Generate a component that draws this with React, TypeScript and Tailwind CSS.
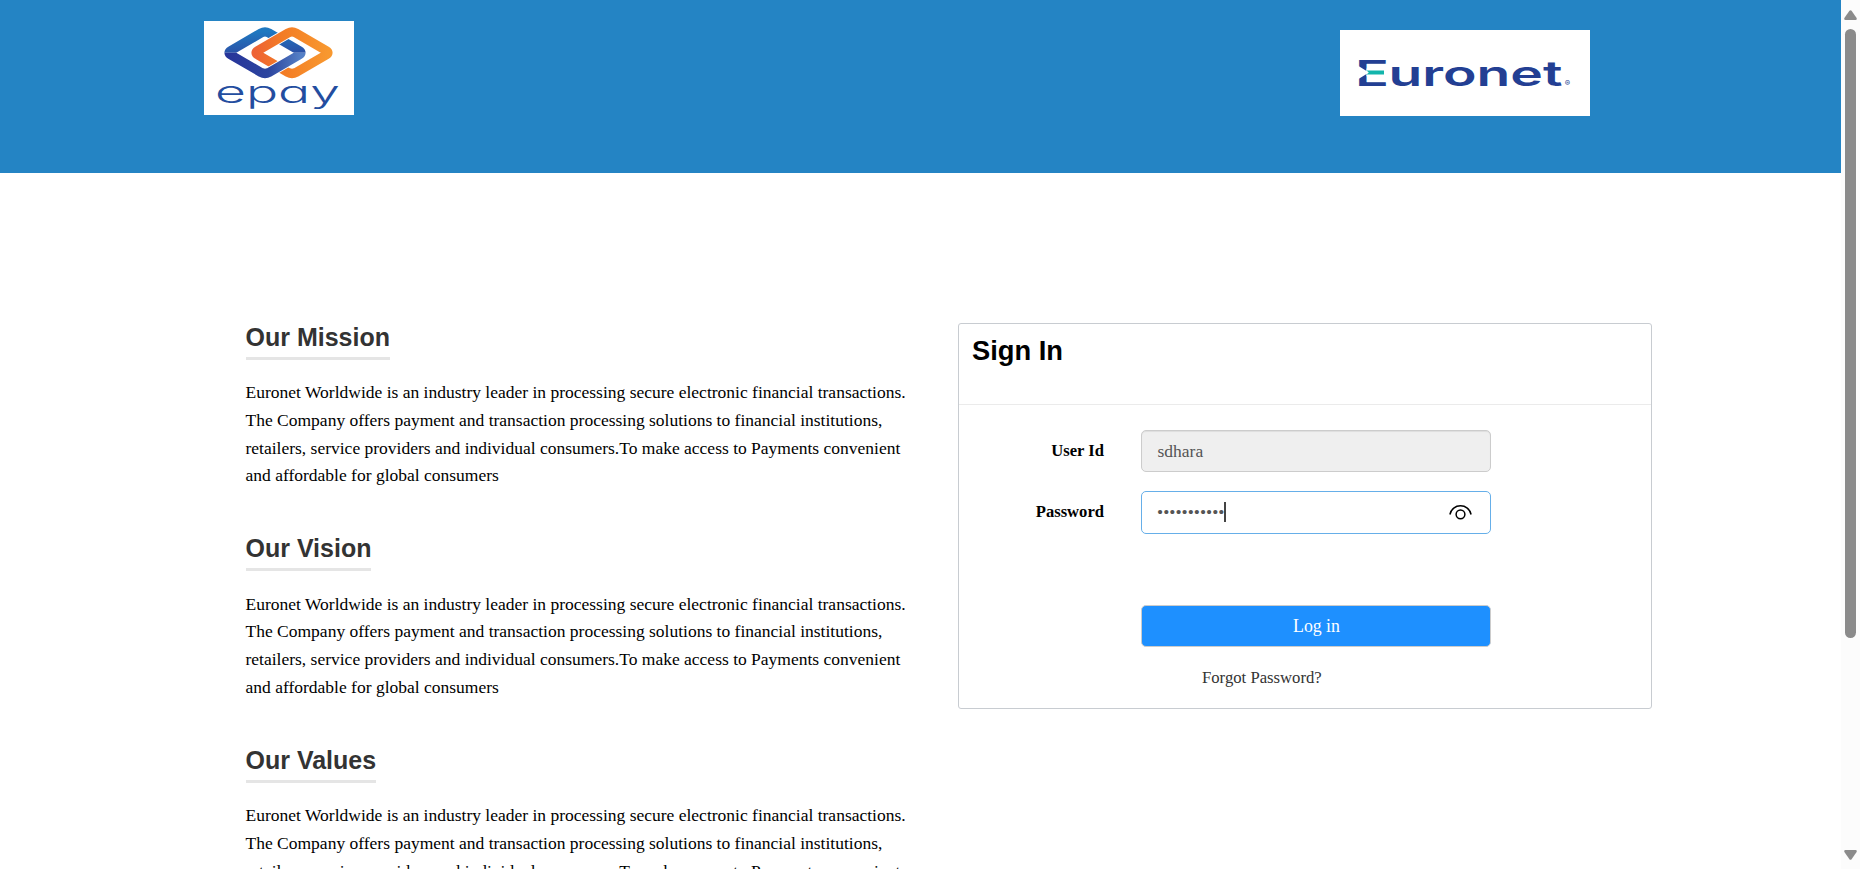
const blurb =
  "Euronet Worldwide is an industry leader in processing secure electronic financial transactions. The Company offers payment and transaction processing solutions to financial institutions, retailers, service providers and individual consumers.To make access to Payments convenient and affordable for global consumers";

const sections = ["Our Mission", "Our Vision", "Our Values"];

const blueRing = "M57 12 Q61 9.8 65 12 L95 29.4 Q99 31.7 95 34 L65 51.4 Q61 53.6 57 51.4 L27 34 Q23 31.7 27 29.4 Z";
const orangeRing = "M84 12 Q88 9.8 92 12 L122 29.4 Q126 31.7 122 34 L92 51.4 Q88 53.6 84 51.4 L54 34 Q50 31.7 54 29.4 Z";

function EpayLogo() {
  return (
    <svg className="h-[94px] w-[150px] bg-white" viewBox="0 0 150 94" fill="none">
      <defs>
        <linearGradient id="blue" x1="0.3" y1="0" x2="0.35" y2="1">
          <stop offset="0" stopColor="#1f78c0" />
          <stop offset="0.5" stopColor="#2a52a8" />
          <stop offset="1" stopColor="#28399a" />
        </linearGradient>
        <linearGradient id="blueLow" x1="0" y1="0" x2="1" y2="0">
          <stop offset="0" stopColor="#27359a" />
          <stop offset="0.55" stopColor="#2c459f" />
          <stop offset="1" stopColor="#5580c6" />
        </linearGradient>
        <linearGradient id="orange" x1="0" y1="0.4" x2="1" y2="0.4">
          <stop offset="0" stopColor="#ee6335" />
          <stop offset="0.35" stopColor="#f37b25" />
          <stop offset="1" stopColor="#f8982f" />
        </linearGradient>
        <clipPath id="lower">
          <rect x="0" y="31.7" width="150" height="40" />
        </clipPath>
      </defs>
      <path d={blueRing} stroke="url(#blue)" strokeWidth="9.2" />
      <path d={orangeRing} stroke="#fff" strokeWidth="11" />
      <path d={orangeRing} stroke="url(#orange)" strokeWidth="9.2" />
      <g clipPath="url(#lower)">
        <path d={blueRing} stroke="#fff" strokeWidth="11" />
        <path d={blueRing} stroke="url(#blueLow)" strokeWidth="9.2" />
      </g>
      <text
        x="11"
        y="81.5"
        textLength="125"
        lengthAdjust="spacingAndGlyphs"
        className="fill-[#234d9f] font-['Inter',sans-serif] text-[30px] font-light [font-feature-settings:'cv11']"
      >
        epay
      </text>
    </svg>
  );
}

function EuronetLogo() {
  return (
    <svg className="h-[86px] w-[250px] bg-white" viewBox="0 0 250 86">
      <text y="55.5" className="fill-[#233f93] font-['Inter',sans-serif] text-[35px] font-semibold">
        <tspan x="15" textLength="34" lengthAdjust="spacingAndGlyphs">
          E
        </tspan>
        <tspan x="48.5" textLength="174" lengthAdjust="spacingAndGlyphs">
          uronet
        </tspan>
      </text>
      <path d="M16 34.5 L29 42.4 L16 50.5 Z M26.5 38.5 H48 V46.3 H26.5 Z" fill="#fff" />
      <path d="M26.5 40.6 H44 V44.4 H26.5 L28.8 42.5 Z" fill="#12b5ac" />
      <text x="224.8" y="55.6" className="fill-[#233f93] font-['Inter',sans-serif] text-[8px]">
        ®
      </text>
    </svg>
  );
}

function EyeIcon() {
  return (
    <svg className="-mt-px h-[18px] w-6" viewBox="0 0 24 18" fill="none" stroke="#000" strokeWidth="1.5">
      <path d="M0.9 11.5 C1.9 6 6.6 2.8 11.5 2.8 S21.1 6 22.1 11.5" />
      <circle cx="11.5" cy="11.3" r="4.4" />
    </svg>
  );
}

function Scrollbar() {
  return (
    <div className="flex h-full w-[19px] flex-col items-center bg-[#fcfcfc] pt-[10px] pb-[9px]">
      <svg className="h-[10px] w-[13px] shrink-0" viewBox="0 0 13 10" fill="#8b8b8b">
        <path d="M5.4 0.8 Q6.5 -0.4 7.6 0.8 L12.6 8 Q13.2 10 11.6 10 H1.4 Q-0.2 10 0.4 8 Z" />
      </svg>
      <div className="mt-[9px] h-[609px] w-[11px] rounded-full bg-[#8b8b8b]" />
      <svg className="mt-auto h-[10px] w-[13px] shrink-0" viewBox="0 0 13 10" fill="#8b8b8b">
        <path d="M5.4 9.2 Q6.5 10.4 7.6 9.2 L12.6 2 Q13.2 0 11.6 0 H1.4 Q-0.2 0 0.4 2 Z" />
      </svg>
    </div>
  );
}

function SignIn() {
  return (
    <section className="h-[386px] w-[694px] rounded-[3px] border border-[#c8ccd1]">
      <header className="h-[81px] border-b border-[#ebebeb] pt-[10px] pl-[13px]">
        <h1 className="font-['Liberation_Sans',sans-serif] text-[27.3px] leading-[33px] font-bold text-black">Sign In</h1>
      </header>
      <div className="grid grid-cols-[145px_350px] gap-x-[37px] pt-[25px]">
        <label className="text-right text-[16.6px] leading-[42px] font-bold text-black">User Id</label>
        <div className="flex h-[42px] items-center rounded-[5px] border border-[#ccc] bg-[#efefef] px-[15.5px] text-[#555] shadow-[inset_0_1px_1px_rgba(0,0,0,0.075)]">
          sdhara
        </div>
        <label className="mt-[19px] text-right text-[16.6px] leading-[42px] font-bold text-black">Password</label>
        <div className="mt-[19px] flex h-[43px] items-center rounded-[5px] border border-[#66afe9] pr-[17px] pl-[15px] text-[#555]">
          <span>•••••••••••</span>
          <span className="-mt-px h-5 w-[2px] bg-[#444]" />
          <span className="ml-auto">
            <EyeIcon />
          </span>
        </div>
        <button className="col-start-2 mt-[71px] h-[42px] rounded-[5px] border border-[#ccc] bg-[#1e90ff] pl-px text-[17.8px] text-white">
          Log in
        </button>
        <a className="col-start-2 mt-[17px] pl-[61px] text-[16.7px] leading-7 text-[#333]">Forgot Password?</a>
      </div>
    </section>
  );
}

export default function App() {
  return (
    <div className="flex h-[869px] w-[1860px] overflow-hidden bg-white font-['Liberation_Serif',serif] text-[17.5px]">
      <div className="h-full w-[1841px] overflow-hidden">
        <header className="flex h-[173px] items-start justify-between bg-[#2484c4] pr-[251px] pl-[204px]">
          <div className="pt-[21px]">
            <EpayLogo />
          </div>
          <div className="pt-[30px]">
            <EuronetLogo />
          </div>
        </header>
        <main className="flex pt-[150px] pl-[245.5px]">
          <div className="-mt-[1.2px] w-[712.5px] pr-10">
            {sections.map((title) => (
              <article key={title} className="mb-[43.1px]">
                <h2 className="w-fit border-b-[3px] border-[#e5e5e5] pb-1 font-['Liberation_Sans',sans-serif] text-[25px] leading-[31px] font-bold text-[#333]">
                  {title}
                </h2>
                <p className="mt-[19.4px] leading-[27.75px] text-black">{blurb}</p>
              </article>
            ))}
          </div>
          <SignIn />
        </main>
      </div>
      <Scrollbar />
    </div>
  );
}
